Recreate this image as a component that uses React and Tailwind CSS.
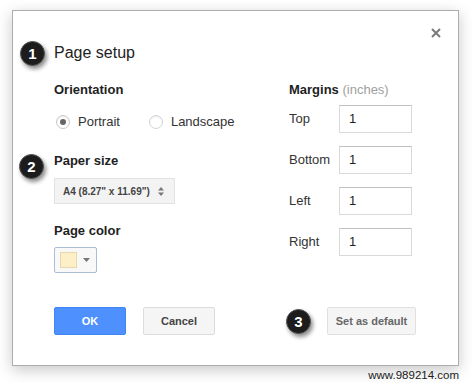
export default function App() {
  const Badge = ({ n, cls }) => (
    <div
      className={`absolute w-[25px] h-[25px] rounded-full bg-[#1c1c1c] border border-[#555] shadow-[2px_3px_4px_rgba(0,0,0,0.45)] flex items-center justify-center text-white font-bold text-[15px] leading-none ${cls}`}
    >
      {n}
    </div>
  );

  const MarginRow = ({ label, first }) => (
    <div className={`flex items-center ${first ? "mt-[7px]" : "mt-[13px]"}`}>
      <span className="w-[50px] text-[13px] leading-[16px] text-[#333]">{label}</span>
      <div className="w-[73px] h-[28px] border border-[#d9d9d9] border-t-[#c0c0c0] bg-white flex items-center pl-[9px] text-[13px] text-[#222]">
        1
      </div>
    </div>
  );

  return (
    <div className="relative w-[473px] h-[383px] bg-white pt-[10px] pl-[12px] font-['Liberation_Sans',Arial,sans-serif]">
      <div className="relative w-[447px] h-[356px] border border-[#adadad] bg-white shadow-[0_4px_14px_rgba(0,0,0,0.22)] pl-[41px] pt-[32px]">
        <div className="absolute right-[17px] top-[17px] w-[10px] h-[10px]">
          <svg width="10" height="10" viewBox="0 0 10 10">
            <path d="M1 1L9 9M9 1L1 9" stroke="#7a7a7a" strokeWidth="2" />
          </svg>
        </div>
        <h1 className="text-[16px] leading-[20px] text-[#222]">Page setup</h1>

        <div className="mt-[19px] flex items-start">
          <div className="w-[235px] flex flex-col items-start">
            <div className="text-[13px] leading-[16px] font-bold text-[#222]">Orientation</div>
            <div className="mt-[16px] flex items-center h-[16px] text-[13px] text-[#333]">
              <span className="ml-[2px] w-[14px] h-[14px] rounded-full border border-[#c8c8c8] bg-white flex items-center justify-center shadow-[inset_0_1px_1px_rgba(0,0,0,0.08)]">
                <span className="w-[6px] h-[6px] rounded-full bg-[#666]" />
              </span>
              <span className="ml-[8px]">Portrait</span>
              <span className="ml-[29px] w-[14px] h-[14px] rounded-full border border-[#d4d4d4] bg-white shadow-[inset_0_1px_1px_rgba(0,0,0,0.08)]" />
              <span className="ml-[8px]">Landscape</span>
            </div>
            <div className="mt-[23px] text-[13px] leading-[16px] font-bold text-[#222]">Paper size</div>
            <div className="mt-[9px] h-[26px] w-[121px] bg-[#f3f3f3] border border-[#e2e2e2] flex items-center pl-[8px] text-[10px] font-bold text-[#444]">
              <span>A4 (8.27" x 11.69")</span>
              <svg className="ml-[8px]" width="6" height="11" viewBox="0 0 6 11">
                <path d="M0 4.5L3 1L6 4.5Z M0 6.5L3 10L6 6.5Z" fill="#777" />
              </svg>
            </div>
            <div className="mt-[19px] text-[13px] leading-[16px] font-bold text-[#222]">Page color</div>
            <div className="mt-[8px] h-[26px] w-[43px] bg-[#f8f8f8] border border-[#a9bcd8] rounded-[2px] flex items-center pl-[5px]">
              <span className="w-[17px] h-[16px] bg-[#fdf0c8] border border-[#ead9a8]" />
              <svg className="ml-[6px]" width="7" height="4" viewBox="0 0 7 4">
                <path d="M0 0L7 0L3.5 4Z" fill="#777" />
              </svg>
            </div>
          </div>

          <div className="flex flex-col">
            <div className="text-[13px] leading-[16px]">
              <span className="font-bold text-[#222]">Margins</span>
              <span className="text-[#a0a0a0]"> (inches)</span>
            </div>
            <MarginRow label="Top" first />
            <MarginRow label="Bottom" />
            <MarginRow label="Left" />
            <MarginRow label="Right" />
          </div>
        </div>

        <div className="mt-[34px] flex items-center">
          <div className="w-[72px] h-[28px] bg-[#4d90fe] border border-[#3f85f5] rounded-[2px] flex items-center justify-center text-white font-bold text-[11px]">
            OK
          </div>
          <div className="ml-[17px] w-[72px] h-[28px] bg-[#f5f5f5] border border-[#dcdcdc] rounded-[2px] flex items-center justify-center text-[#444] font-bold text-[11px]">
            Cancel
          </div>
          <div className="ml-[112px] w-[89px] h-[28px] bg-[#f5f5f5] border border-[#e0e0e0] rounded-[2px] flex items-center justify-center text-[#666] font-bold text-[11px]">
            Set as default
          </div>
        </div>
      </div>
      <div className="w-[447px] mt-[2px] text-right text-[11.5px] leading-[14px] text-[#222]">www.989214.com</div>

      <Badge n="1" cls="left-[20px] top-[41px]" />
      <Badge n="2" cls="left-[19px] top-[154px]" />
      <Badge n="3" cls="left-[286px] top-[309px]" />
    </div>
  );
}
